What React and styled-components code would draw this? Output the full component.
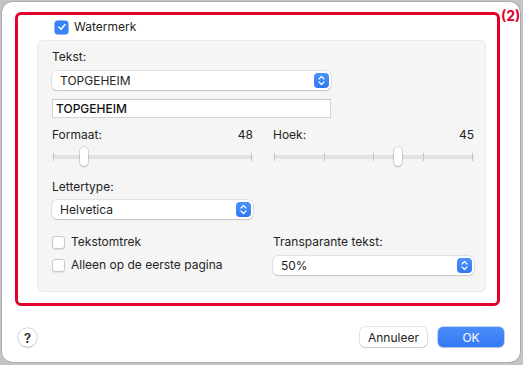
import styled, { createGlobalStyle } from "styled-components"

const GlobalStyle = createGlobalStyle`
  html, body {
    margin: 0;
    padding: 0;
  }
  body {
    width: 523px;
    height: 365px;
    overflow: hidden;
    background: #c4c4c4;
    font-family: Inter, "Noto Sans", sans-serif;
    font-size: 12px;
    color: #242424;
  }
`

const Window = styled.div`
    position: relative;
    margin: 2px 0 0 2px;
    width: 518px;
    height: 360px;
    box-sizing: border-box;
    background: #fff;
    border-radius: 10px;
    box-shadow: 0 0 0 0.5px rgba(0, 0, 0, 0.25);
    display: flex;
    flex-direction: column;
`
const Marker = styled.div`
    box-sizing: border-box;
    margin: 10px 0 0 13px;
    width: 485px;
    height: 294px;
    border: 3px solid #e3002c;
    border-radius: 6px;
    padding: 3px 0 0 19px;
`
const MarkerLabel = styled.span`
    position: absolute;
    left: 499px;
    top: 7px;
    font-size: 14px;
    line-height: 14px;
    font-weight: 700;
    color: #e3002c;
`
const CheckRow = styled.label`
    display: flex;
    align-items: center;
    gap: 6px;
    height: ${p => p.$h || 16}px;
    margin-left: ${p => p.$indent || 0}px;
    margin-top: ${p => p.$top || 0}px;
    line-height: 16px;
`
const Box = styled.span`
    flex: none;
    width: 13px;
    height: 13px;
    box-sizing: border-box;
    border-radius: 3px;
    display: flex;
    align-items: center;
    justify-content: center;
    background: ${p => (p.$on ? "#3a82f7" : "#fff")};
    border: ${p => (p.$on ? "none" : "1px solid #c9c9c9")};
    box-shadow: ${p => (p.$on ? "0 0 0 0.5px #2f6fe0" : "0 0.5px 1px rgba(0,0,0,0.08)")};
`
const Panel = styled.div`
    box-sizing: border-box;
    margin-top: 6px;
    width: 449px;
    height: 252px;
    background: #f5f5f5;
    border: 1px solid #ebebeb;
    border-radius: 5px;
    padding: 8px 0 0 14px;
`
const Label = styled.div`
    line-height: 16px;
    margin-top: ${p => p.$top || 0}px;
`
const Popup = styled.div`
    box-sizing: border-box;
    margin-top: ${p => p.$top || 0}px;
    width: ${p => p.$w}px;
    height: 19px;
    background: #fff;
    border-radius: 5px;
    box-shadow: 0 0 0 0.5px rgba(0, 0, 0, 0.16), 0 1px 1.5px rgba(0, 0, 0, 0.12);
    display: flex;
    align-items: center;
    justify-content: space-between;
    padding: 0 2px 0 8px;
`
const Stepper = styled.span`
    width: 15px;
    height: 15px;
    border-radius: 4px;
    background: linear-gradient(#4d92fa, #2f78f3);
    display: flex;
    align-items: center;
    justify-content: center;
`
const Field = styled.div`
    box-sizing: border-box;
    margin-top: 9px;
    width: 279px;
    height: 19px;
    background: #fff;
    border: 1px solid #d3d3d3;
    border-top-color: #c6c6c6;
    padding-left: 3px;
    line-height: 17px;
    font-weight: 500;
    color: #111;
`
const Columns = styled.div`
    display: flex;
    gap: 20px;
    margin-top: 9px;
`
const Column = styled.div`
    width: 201px;
    display: flex;
    flex-direction: column;
`
const Header = styled.div`
    display: flex;
    justify-content: space-between;
    line-height: 16px;
`
const Slider = styled.div`
    position: relative;
    margin-top: 4px;
    height: 20px;
`
const Track = styled.div`
    position: absolute;
    left: 0;
    right: 0;
    top: 8px;
    height: 4px;
    border-radius: 2px;
    background: #e2e2e2;
`
const Ticks = styled.div`
    position: absolute;
    inset: 0 1px;
    display: flex;
    justify-content: space-between;
    align-items: center;
`
const Tick = styled.span`
    width: 1px;
    height: 8px;
    background: #c4c4c4;
`
const Thumb = styled.span`
    position: absolute;
    top: 0;
    width: 8px;
    height: 19px;
    border-radius: 4px;
    background: #fff;
    box-shadow: 0 0 0 0.5px rgba(0, 0, 0, 0.22), 0 1px 2px rgba(0, 0, 0, 0.18);
`
const Bar = styled.div`
    display: flex;
    align-items: center;
    height: 20px;
    margin-top: 21px;
    padding: 0 16px;
`
const Help = styled.span`
    width: 19px;
    height: 19px;
    margin-top: 1px;
    border-radius: 50%;
    background: #fff;
    box-shadow: 0 0 0 0.5px rgba(0, 0, 0, 0.25), 0 1px 1.5px rgba(0, 0, 0, 0.12);
    display: flex;
    align-items: center;
    justify-content: center;
    font-size: 13px;
    font-weight: 600;
    color: #222;
`
const Button = styled.button`
    box-sizing: border-box;
    width: ${p => p.$w}px;
    height: 20px;
    margin-left: ${p => p.$gap}px;
    border: none;
    border-radius: 5px;
    font-family: inherit;
    font-size: 12px;
    padding: 0;
    background: ${p => (p.$primary ? "linear-gradient(#4a8df8, #3479f5)" : "#fff")};
    color: ${p => (p.$primary ? "#fff" : "#242424")};
    box-shadow: ${p =>
        p.$primary
            ? "0 0 0 0.5px rgba(30, 90, 220, 0.5), 0 1px 1.5px rgba(0, 0, 0, 0.12)"
            : "0 0 0 0.5px rgba(0, 0, 0, 0.2), 0 1px 1.5px rgba(0, 0, 0, 0.12)"};
`

const Check = () => (
    <svg width="10" height="10" viewBox="0 0 10 10">
        <path d="M2 5.2 L4.1 7.3 L8 2.6" fill="none" stroke="#fff" strokeWidth="1.6" strokeLinecap="round" strokeLinejoin="round" />
    </svg>
)

const Chevrons = () => (
    <svg width="7" height="11" viewBox="0 0 7 11">
        <path d="M1 4 L3.5 1.5 L6 4 M1 7 L3.5 9.5 L6 7" fill="none" stroke="#fff" strokeWidth="1.2" strokeLinecap="round" strokeLinejoin="round" />
    </svg>
)

const Select = ({ value, width, top }) => (
    <Popup $w={width} $top={top}>
        <span>{value}</span>
        <Stepper><Chevrons /></Stepper>
    </Popup>
)

const Range = ({ label, value, thumb, ticks }) => (
    <>
        <Header>
            <span>{label}</span>
            <span>{value}</span>
        </Header>
        <Slider>
            <Track />
            <Ticks>
                {Array.from({ length: ticks }).map((_, i) => <Tick key={i} />)}
            </Ticks>
            <Thumb style={{ left: thumb }} />
        </Slider>
    </>
)

const App = () => {
  return (
    <>
    <GlobalStyle />
    <Window>
        <MarkerLabel>(2)</MarkerLabel>
        <Marker>
            <CheckRow $indent={18} $top={2} $h={14}>
                <Box $on><Check /></Box>
                Watermerk
            </CheckRow>
            <Panel>
                <Label>Tekst:</Label>
                <Select value="TOPGEHEIM" width={279} top={6} />
                <Field>TOPGEHEIM</Field>
                <Columns>
                    <Column>
                        <Range label="Formaat:" value="48" thumb={28} ticks={2} />
                        <Label $top={12}>Lettertype:</Label>
                        <Select value="Helvetica" width={201} top={5} />
                        <CheckRow $top={15}>
                            <Box />
                            Tekstomtrek
                        </CheckRow>
                        <CheckRow $top={7}>
                            <Box />
                            Alleen op de eerste pagina
                        </CheckRow>
                    </Column>
                    <Column>
                        <Range label="Hoek:" value="45" thumb={121} ticks={5} />
                        <Label $top={67}>Transparante tekst:</Label>
                        <Select value="50%" width={201} top={6} />
                    </Column>
                </Columns>
            </Panel>
        </Marker>
        <Bar>
            <Help>?</Help>
            <Button $w={67} $gap={323}>Annuleer</Button>
            <Button $w={66} $gap={11} $primary>OK</Button>
        </Bar>
    </Window>
    </>
  )
}

export default App
